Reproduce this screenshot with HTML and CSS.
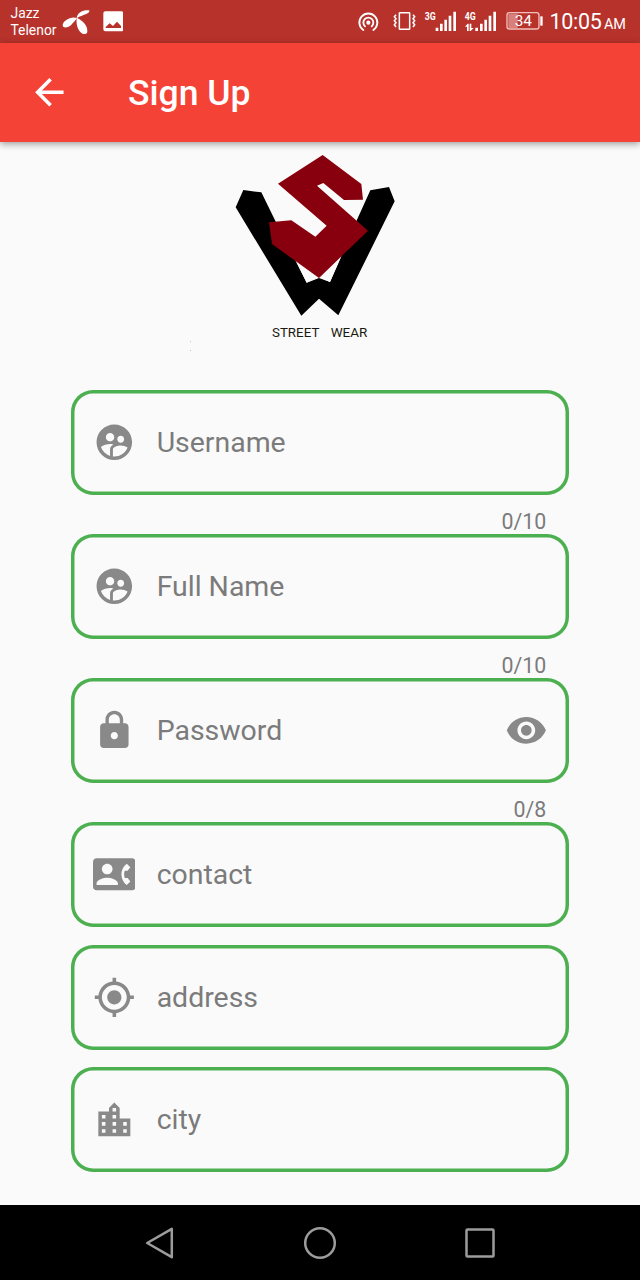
FILE: index.html
```html
<!DOCTYPE html>
<html lang="en">
<head>
<meta charset="utf-8">
<title>Sign Up</title>
<link rel="stylesheet" href="styles.css">
</head>
<body>
<div class="screen">
  <header class="status">
    <div class="carrier"><span>Jazz</span><span>Telenor</span></div>
    <svg class="st-telenor" viewBox="184 26 84 78"><g fill="#fff"><path d="M228 53C230 36 248 28 266 30C268 42 246 43 229 53Z"/><path d="M229 53C212 46 187 60 186 74C187 86 203 82 212 73C220 65 224 60 229 53Z"/><path d="M228 52C238 56 257 70 259 84C261 95 261 102 251 101C236 100 225 78 228 52Z"/></g></svg>
    <svg class="st-photo" viewBox="308 32 62 62"><path fill="#fff" fill-rule="evenodd" d="M315 33h48q6 0 6 6v48q0 6-6 6h-48q-6 0-6-6V39q0-6 6-6ZM316 83h46v-6l-12-13-12 13-10-8-12 11Z"/></svg>
    <div class="tray">
      <svg class="st-hotspot" viewBox="50 32 68 68" fill="none" stroke="#fff" stroke-width="5.500" stroke-linecap="round"><path d="M69 89A27 27 0 1 1 99 89"/><path d="M74 78A15 15 0 1 1 94 78"/><circle cx="84" cy="67" r="3.500" fill="#fff"/></svg>
      <svg class="st-vibrate" viewBox="154 34 74 60" fill="none" stroke="#fff" stroke-width="4.500"><rect x="176" y="39" width="31" height="50" rx="2"/><path d="M166 45l-5 6 5 6-5 6 5 6-5 6 5 7M217 45l5 6-5 6 5 6-5 6 5 6-5 7"/></svg>
      <svg class="st-sig3" viewBox="252 30 99 66"><text class="net" x="254" y="60" textLength="33" lengthAdjust="spacingAndGlyphs">3G</text><path fill="#fff" d="M287 83h8v10h-8zM300 71h8v22h-8zM313 59h8v34h-8zM326 47h8v46h-8zM340 35h8v58h-8z"/></svg>
      <svg class="st-sig4" viewBox="372 30 99 66"><text class="net" x="374" y="60" textLength="33" lengthAdjust="spacingAndGlyphs">4G</text><path fill="#fff" d="M375 80l8-9h3v22h-5V80zM389 71h5v13h7l-9 9h-3zM406 83h8v10h-8zM420 71h8v22h-8zM433 59h8v34h-8zM446 47h8v46h-8zM460 35h8v58h-8z"/></svg>
      <svg class="st-batt" viewBox="49 34 112 60"><path fill="#d8807b" d="M56 42h28v43H56z"/><rect x="52" y="39" width="96" height="49" rx="7" fill="none" stroke="#f2c0bb" stroke-width="4"/><path d="M152 50h7v28h-7z" fill="#fff"/><text class="pct" x="75" y="80" textLength="52" lengthAdjust="spacingAndGlyphs">34</text></svg>
      <div class="clock"><span class="time">10:05</span><span class="ampm">AM</span></div>
    </div>
  </header>
  <nav class="appbar">
    <svg class="back" viewBox="0 0 24 24"><path fill="#fff" d="M20 11H7.830l5.590-5.590L12 4l-8 8 8 8 1.410-1.410L7.830 13H20v-2z"/></svg>
    <h1>Sign Up</h1>
  </nav>
  <main>
    <svg class="logo" viewBox="0 0 720 645">
      <path fill="#000" d="M190 135L244 142L288 232L380 413L417 397L450 411L483 336L533 220L571 136L627 126L644 169L475 511L417 461L364 512L167 187Z"/>
      <path fill="#fafafa" d="M350 352L380 413L417 399L450 411L483 336L417 380Z"/>
      <path fill="#88000d" d="M428 30L544 117L549 164L492 165L430 114L411 122L564 257L417 399L276 297L267 232L334 226L406 275L440 242L294 116Z"/>
      <text class="brand" x="276" y="575" textLength="142" lengthAdjust="spacingAndGlyphs">STREET</text>
      <text class="brand" x="452" y="575" textLength="110" lengthAdjust="spacingAndGlyphs">WEAR</text>
      <path fill="#bbb" d="M30 589h3v3h-3zM30 615h3v3h-3z"/>
    </svg>
    <form class="form">
      <div class="field">
        <svg class="ico" viewBox="0 0 24 24"><path d="M11.99 2c-5.52 0-10 4.48-10 10s4.48 10 10 10 10-4.48 10-10-4.48-10-10-10zm3.61 6.34c1.07 0 1.93.86 1.93 1.93 0 1.07-.86 1.93-1.93 1.93-1.07 0-1.93-.86-1.93-1.93-.01-1.07.86-1.93 1.93-1.93zm-6-1.58c1.3 0 2.36 1.06 2.36 2.36 0 1.3-1.06 2.36-2.36 2.36s-2.36-1.06-2.36-2.36c0-1.31 1.05-2.36 2.36-2.36zm0 9.13v3.75c-2.4-.75-4.3-2.6-5.14-4.96 1.05-1.12 3.67-1.69 5.14-1.69.53 0 1.2.08 1.9.22-1.64.87-1.9 2.02-1.9 2.68zM11.99 20c-.27 0-.53-.01-.79-.04v-4.07c0-1.42 2.94-2.13 4.4-2.13 1.07 0 2.92.39 3.84 1.15-1.17 2.97-4.06 5.09-7.45 5.09z"/></svg>
        <span>Username</span>
      </div>
      <div class="counter">0/10</div>
      <div class="field">
        <svg class="ico" viewBox="0 0 24 24"><path d="M11.99 2c-5.52 0-10 4.48-10 10s4.48 10 10 10 10-4.48 10-10-4.48-10-10-10zm3.61 6.34c1.07 0 1.93.86 1.93 1.93 0 1.07-.86 1.93-1.93 1.93-1.07 0-1.93-.86-1.93-1.93-.01-1.07.86-1.93 1.93-1.93zm-6-1.58c1.3 0 2.36 1.06 2.36 2.36 0 1.3-1.06 2.36-2.36 2.36s-2.36-1.06-2.36-2.36c0-1.31 1.05-2.36 2.36-2.36zm0 9.13v3.75c-2.4-.75-4.3-2.6-5.14-4.96 1.05-1.12 3.67-1.69 5.14-1.69.53 0 1.2.08 1.9.22-1.64.87-1.9 2.02-1.9 2.68zM11.99 20c-.27 0-.53-.01-.79-.04v-4.07c0-1.42 2.94-2.13 4.4-2.13 1.07 0 2.92.39 3.84 1.15-1.17 2.97-4.06 5.09-7.45 5.09z"/></svg>
        <span>Full Name</span>
      </div>
      <div class="counter">0/10</div>
      <div class="field">
        <svg class="ico" viewBox="0 0 24 24"><path d="M18 8h-1V6c0-2.76-2.24-5-5-5S7 3.240 7 6v2H6c-1.100 0-2 .9-2 2v10c0 1.100.9 2 2 2h12c1.100 0 2-.9 2-2V10c0-1.100-.9-2-2-2zm-6 9c-1.100 0-2-.9-2-2s.9-2 2-2 2 .9 2 2-.9 2-2 2zm3.100-9H8.900V6c0-1.710 1.390-3.100 3.100-3.100 1.710 0 3.100 1.390 3.100 3.100v2z"/></svg>
        <span>Password</span>
        <svg class="ico eye" viewBox="0 0 24 24"><path d="M12 4.500C7 4.500 2.730 7.610 1 12c1.730 4.390 6 7.500 11 7.500s9.270-3.110 11-7.500c-1.730-4.390-6-7.500-11-7.500zM12 17c-2.760 0-5-2.240-5-5s2.240-5 5-5 5 2.240 5 5-2.240 5-5 5zm0-8c-1.660 0-3 1.340-3 3s1.340 3 3 3 3-1.340 3-3-1.340-3-3-3z"/></svg>
      </div>
      <div class="counter">0/8</div>
      <div class="field">
        <svg class="ico" viewBox="0 0 24 24"><path d="M22 3H2C.9 3 0 3.900 0 5v14c0 1.100.9 2 2 2h20c1.100 0 1.990-.9 1.990-2L24 5c0-1.100-.9-2-2-2zM8 6c1.660 0 3 1.340 3 3s-1.340 3-3 3-3-1.340-3-3 1.340-3 3-3zm6 12H2v-1c0-2 4-3.100 6-3.100s6 1.100 6 3.100v1zm3.850-4h1.640L21 16l-1.990 1.990c-1.310-.98-2.280-2.380-2.730-3.990-.18-.64-.28-1.310-.28-2s.1-1.360.28-2c.45-1.620 1.420-3.010 2.730-3.990L21 8l-1.510 2h-1.640c-.22.630-.35 1.300-.35 2s.13 1.370.35 2z"/></svg>
        <span>contact</span>
      </div>
      <div class="field lower">
        <svg class="ico" viewBox="0 0 24 24"><path d="M12 8c-2.210 0-4 1.790-4 4s1.790 4 4 4 4-1.790 4-4-1.790-4-4-4zm8.940 3c-.46-4.170-3.770-7.480-7.940-7.940V1h-2v2.060C6.830 3.520 3.520 6.830 3.060 11H1v2h2.060c.46 4.170 3.770 7.480 7.940 7.940V23h2v-2.060c4.170-.46 7.480-3.770 7.940-7.940H23v-2h-2.060zM12 19c-3.870 0-7-3.130-7-7s3.130-7 7-7 7 3.130 7 7-3.130 7-7 7z"/></svg>
        <span>address</span>
      </div>
      <div class="field lower">
        <svg class="ico" viewBox="0 0 24 24"><path d="M15 11V5l-3-3-3 3v2H3v14h18V11h-6zm-8 8H5v-2h2v2zm0-4H5v-2h2v2zm0-4H5V9h2v2zm6 8h-2v-2h2v2zm0-4h-2v-2h2v2zm0-4h-2V9h2v2zm0-4h-2V5h2v2zm6 12h-2v-2h2v2zm0-4h-2v-2h2v2z"/></svg>
        <span>city</span>
      </div>
    </form>
  </main>
  <footer class="navbar">
    <svg viewBox="0 0 34 34"><path d="M28.800 2.800V31.200L4.200 17Z"/></svg>
    <svg viewBox="0 0 34 34"><circle cx="17" cy="17" r="14.800"/></svg>
    <svg viewBox="0 0 34 34"><rect x="3.500" y="3.500" width="27" height="27" rx="1"/></svg>
  </footer>
</div>
</body>
</html>
```
FILE: styles.css
```css
* { box-sizing: border-box; }
body { margin: 0; font-family: Roboto, "Liberation Sans", sans-serif; background: #fafafa; }
svg { display: block; flex: none; }
.screen { width: 640px; height: 1280px; display: flex; flex-direction: column; overflow: hidden; }

.status { height: 43px; flex: none; background: #b7322b; color: #fff; display: flex; align-items: flex-start; padding-left: 10.500px; }
.carrier { display: flex; flex-direction: column; width: 51px; padding-top: 5px; font-size: 13.900px; line-height: 17px; }
.st-telenor { width: 28px; height: 26px; margin-top: 9px; }
.st-photo { width: 20.700px; height: 20.700px; margin: 11px 0 0 13px; }
.tray { display: flex; align-items: flex-start; margin-left: auto; padding-right: 14px; }
.st-hotspot { width: 22.700px; height: 22.700px; margin-top: 10.700px; }
.st-vibrate { width: 24.700px; height: 20px; margin: 11.300px 0 0 12px; }
.st-sig3 { width: 33px; height: 22px; margin: 10px 0 0 7.500px; }
.st-sig4 { width: 33px; height: 22px; margin: 10px 0 0 7px; }
.st-batt { width: 37.300px; height: 20px; margin: 11.300px 0 0 9px; }
.net { font: 700 30px Roboto, sans-serif; fill: #fff; }
.pct { font: 400 43px Roboto, sans-serif; fill: #fff; }
.clock { width: 76.500px; margin-left: 6.500px; display: flex; align-items: baseline; justify-content: space-between; line-height: 44px; white-space: nowrap; }
.time { font-size: 21.500px; letter-spacing: -.3px; }
.ampm { font-size: 14.500px; }

.appbar { height: 99px; flex: none; position: relative; background: #f44336; color: #fff; display: flex; align-items: center; padding-left: 28px; box-shadow: 0 2px 7px rgba(0,0,0,.38); }
.back { width: 42.670px; height: 42.670px; }
.appbar h1 { margin: 1px 0 0 57.300px; font-size: 35.550px; line-height: 42px; font-weight: 500; }

main { flex: 1; display: flex; flex-direction: column; }
.logo { width: 240px; height: 215px; margin: 3px 0 0 180px; }
.brand { font: 400 40px Roboto, sans-serif; fill: #1c1a10; }
.form { margin: 30px 71px 0; display: flex; flex-direction: column; }
.field { height: 105px; display: flex; align-items: center; padding: 0 21.300px 0 21.800px; border-radius: 22px; box-shadow: inset 0 0 0 3.500px #4caf50; color: #7b7b7b; font-size: 28.440px; }
.field span { margin-left: 21.200px; flex: 1; }
.lower { margin-top: 17.700px; }
.ico { width: 42.670px; height: 42.670px; fill: #898989; }
.counter { height: 39px; padding: 13px 22.700px 0 0; text-align: right; font-size: 21.330px; line-height: 28px; color: #7b7b7b; }

.navbar { height: 75px; flex: none; background: #000; display: flex; align-items: center; justify-content: space-between; padding: 0 143px; }
.navbar svg { width: 34px; height: 34px; fill: none; stroke: #9c9c9c; stroke-width: 2.500; stroke-linejoin: round; }
```
